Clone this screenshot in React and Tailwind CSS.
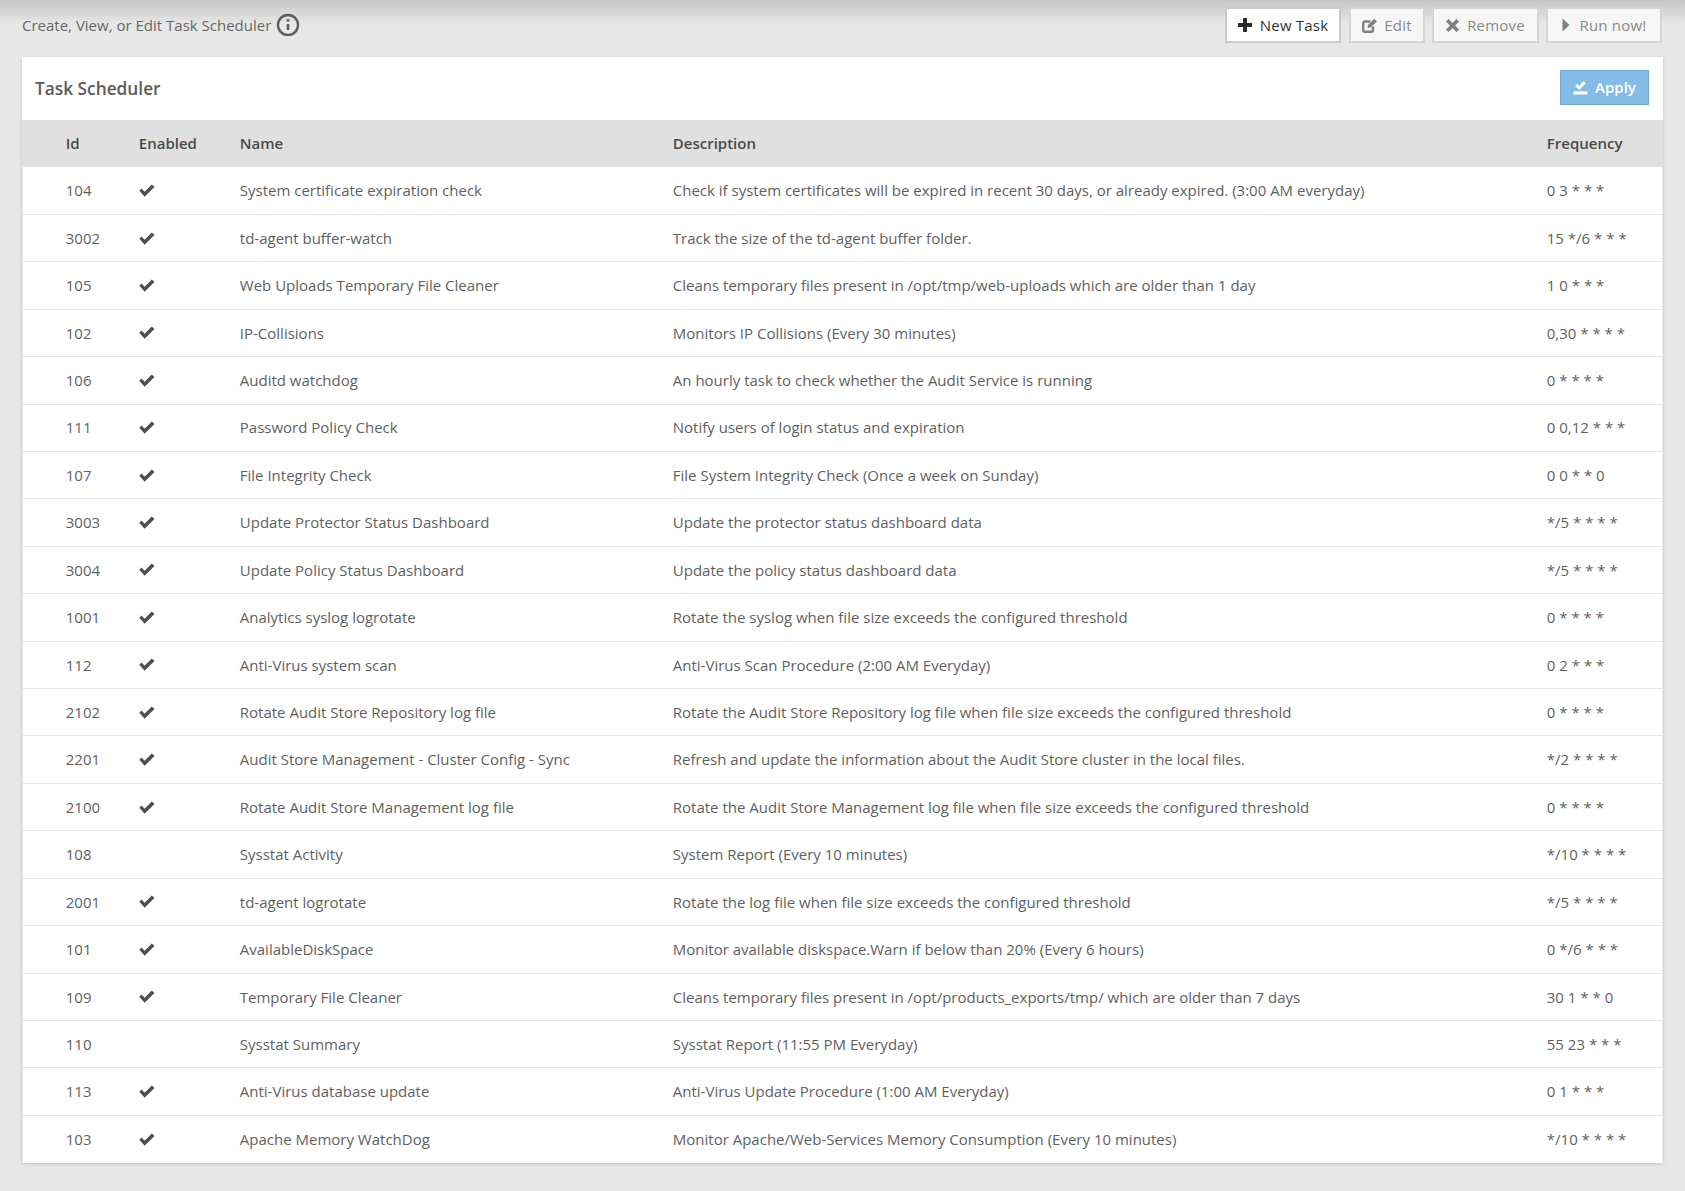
import React from "react";

const rows = [
  ["104", 1, "System certificate expiration check", "Check if system certificates will be expired in recent 30 days, or already expired. (3:00 AM everyday)", "0 3 * * *"],
  ["3002", 1, "td-agent buffer-watch", "Track the size of the td-agent buffer folder.", "15 */6 * * *"],
  ["105", 1, "Web Uploads Temporary File Cleaner", "Cleans temporary files present in /opt/tmp/web-uploads which are older than 1 day", "1 0 * * *"],
  ["102", 1, "IP-Collisions", "Monitors IP Collisions (Every 30 minutes)", "0,30 * * * *"],
  ["106", 1, "Auditd watchdog", "An hourly task to check whether the Audit Service is running", "0 * * * *"],
  ["111", 1, "Password Policy Check", "Notify users of login status and expiration", "0 0,12 * * *"],
  ["107", 1, "File Integrity Check", "File System Integrity Check (Once a week on Sunday)", "0 0 * * 0"],
  ["3003", 1, "Update Protector Status Dashboard", "Update the protector status dashboard data", "*/5 * * * *"],
  ["3004", 1, "Update Policy Status Dashboard", "Update the policy status dashboard data", "*/5 * * * *"],
  ["1001", 1, "Analytics syslog logrotate", "Rotate the syslog when file size exceeds the configured threshold", "0 * * * *"],
  ["112", 1, "Anti-Virus system scan", "Anti-Virus Scan Procedure (2:00 AM Everyday)", "0 2 * * *"],
  ["2102", 1, "Rotate Audit Store Repository log file", "Rotate the Audit Store Repository log file when file size exceeds the configured threshold", "0 * * * *"],
  ["2201", 1, "Audit Store Management - Cluster Config - Sync", "Refresh and update the information about the Audit Store cluster in the local files.", "*/2 * * * *"],
  ["2100", 1, "Rotate Audit Store Management log file", "Rotate the Audit Store Management log file when file size exceeds the configured threshold", "0 * * * *"],
  ["108", 0, "Sysstat Activity", "System Report (Every 10 minutes)", "*/10 * * * *"],
  ["2001", 1, "td-agent logrotate", "Rotate the log file when file size exceeds the configured threshold", "*/5 * * * *"],
  ["101", 1, "AvailableDiskSpace", "Monitor available diskspace.Warn if below than 20% (Every 6 hours)", "0 */6 * * *"],
  ["109", 1, "Temporary File Cleaner", "Cleans temporary files present in /opt/products_exports/tmp/ which are older than 7 days", "30 1 * * 0"],
  ["110", 0, "Sysstat Summary", "Sysstat Report (11:55 PM Everyday)", "55 23 * * *"],
  ["113", 1, "Anti-Virus database update", "Anti-Virus Update Procedure (1:00 AM Everyday)", "0 1 * * *"],
  ["103", 1, "Apache Memory WatchDog", "Monitor Apache/Web-Services Memory Consumption (Every 10 minutes)", "*/10 * * * *"],
];

const cols = "grid grid-cols-[73px_101px_433px_874px_1fr] items-center";

function CheckIcon() {
  return (
    <svg width="16" height="13" viewBox="0 0 16 13" fill="#4f4f4f">
      <path d="M0.3 6.8 L2.5 4.6 L5.6 7.7 L12.8 0.5 L15.5 3 L5.6 12.8 Z" />
    </svg>
  );
}

function PlusIcon() {
  return (
    <svg width="14" height="14" viewBox="0 0 14 14" fill="#2b2b2b">
      <path d="M5 0 H9 V5 H14 V9 H9 V14 H5 V9 H0 V5 H5 Z" />
    </svg>
  );
}

function EditIcon() {
  return (
    <svg width="16" height="15" viewBox="0 0 16 15" fill="none" stroke="#808080">
      <path d="M11 8.5 V12 Q11 13.7 9.3 13.7 H3 Q1.2 13.7 1.2 12 V5.5 Q1.2 3.5 3 3.5 H8.5" strokeWidth="2.4" />
      <path d="M5.5 10 L6 7 L12.2 0.8 L15 3.4 L8.5 9.6 Z" fill="#808080" stroke="none" />
    </svg>
  );
}

function TimesIcon() {
  return (
    <svg width="13" height="13" viewBox="0 0 13 13" fill="#808080">
      <path d="M2.6 0 L6.5 3.9 L10.4 0 L13 2.6 L9.1 6.5 L13 10.4 L10.4 13 L6.5 9.1 L2.6 13 L0 10.4 L3.9 6.5 L0 2.6 Z" />
    </svg>
  );
}

function RunIcon() {
  return (
    <svg width="8" height="14" viewBox="0 0 8 14" fill="#808080">
      <path d="M0.5 0.5 L7.5 7 L0.5 13.5 Z" />
    </svg>
  );
}

function ToolButton({ icon, label, active, widthClass }) {
  return (
    <button
      className={
        "flex h-[36px] items-center justify-center border-2 text-[15px] tracking-[0.2px] " +
        widthClass +
        (active
          ? " border-[#cacaca] bg-white text-[#333]"
          : " border-[#d4d4d4] bg-[#f6f6f6] text-[#8a8a8a]")
      }
    >
      {icon}
      {label}
    </button>
  );
}

export default function App() {
  return (
    <div className="min-h-[1191px] bg-[#e7e7e7] bg-gradient-to-b from-[#c6c6c6] to-[#e7e7e7] to-[24px] font-['Open_Sans',sans-serif] text-[15px] text-[#5f5f5f]">
      <div className="flex h-[57px] items-start justify-between pl-[22px] pr-[23px] pt-[7px]">
        <div className="flex h-[36px] items-center gap-[5px] text-[#666]">
          <span>Create, View, or Edit Task Scheduler</span>
          <svg width="24" height="24" viewBox="0 0 24 24" fill="none" stroke="#5c5c5c">
            <circle cx="12" cy="12" r="10" strokeWidth="2.4" />
            <path d="M12 11v6" strokeWidth="2.6" />
            <circle cx="12" cy="7.5" r="1.4" fill="#5c5c5c" stroke="none" />
          </svg>
        </div>
        <div className="flex gap-[7px]">
          <ToolButton active widthClass="mr-px w-[116px] gap-[8px]" label="New Task" icon={<PlusIcon />} />
          <ToolButton widthClass="w-[76px] gap-[6px]" label="Edit" icon={<EditIcon />} />
          <ToolButton widthClass="w-[107px] gap-[8px]" label="Remove" icon={<TimesIcon />} />
          <ToolButton widthClass="w-[116px] gap-[10px]" label="Run now!" icon={<RunIcon />} />
        </div>
      </div>

      <div className="ml-[22px] w-[1641px] bg-white shadow-[0_1px_3px_rgba(0,0,0,0.15)]">
        <div className="flex h-[63px] items-center justify-between pl-[13px] pr-[14px]">
          <h1 className="text-[17.3px] font-semibold text-[#5a5a5a]">Task Scheduler</h1>
          <button className="mb-[2px] flex h-[35px] w-[89px] items-center justify-center gap-[7px] border border-[#6fabd9] bg-[#85bce6] text-[15px] font-semibold text-white">
            <svg width="15" height="15" viewBox="0 0 15 15" fill="white">
              <path d="M2.2 6 L4.2 4 L6.1 5.9 L10.6 1 L12.8 3.2 L6.1 10 Z" />
              <rect x="0.5" y="11.3" width="14" height="3.2" />
            </svg>
            Apply
          </button>
        </div>

        <div className={cols + " h-[47.4px] bg-[#e0e0e0] pl-[43.8px] font-semibold text-[#4a4a4a]"}>
          <div>Id</div>
          <div>Enabled</div>
          <div>Name</div>
          <div>Description</div>
          <div>Frequency</div>
        </div>

        {rows.map((r) => (
          <div key={r[0]} className={cols + " h-[47.43px] border-x border-b border-[#e7e7e7] pl-[42.8px] last:border-b-0"}>
            <div>{r[0]}</div>
            <div>{r[1] ? <CheckIcon /> : null}</div>
            <div>{r[2]}</div>
            <div>{r[3]}</div>
            <div>{r[4]}</div>
          </div>
        ))}
      </div>
    </div>
  );
}
